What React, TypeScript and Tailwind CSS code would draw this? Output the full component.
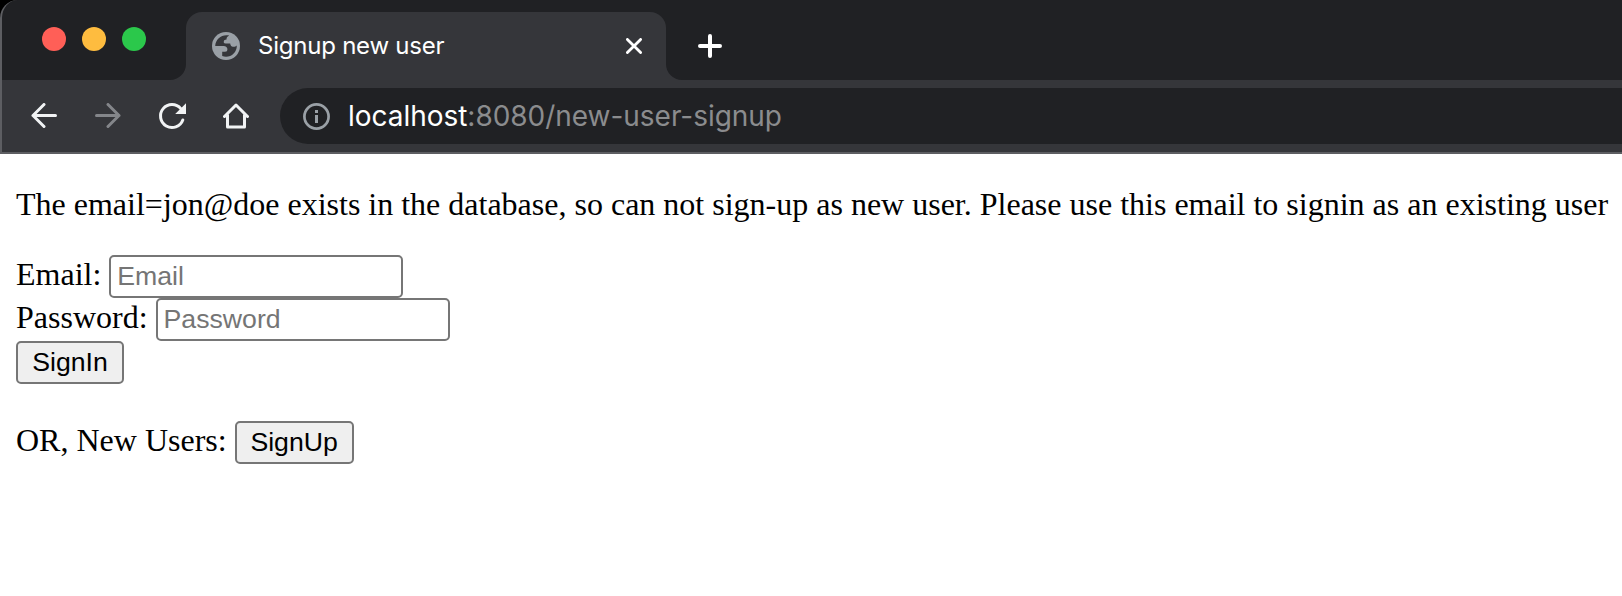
import React from "react";

function TrafficLights() {
  return (
    <div className="mt-[27px] ml-[40px] flex w-[144px] shrink-0 gap-4">
      <span className="size-6 rounded-full bg-[#ff5f57]" />
      <span className="size-6 rounded-full bg-[#febc3f]" />
      <span className="size-6 rounded-full bg-[#2bc84b]" />
    </div>
  );
}

function Globe() {
  return (
    <svg viewBox="0 0 28 28" className="size-7 shrink-0">
      <circle cx="14" cy="14" r="14" fill="#9aa0a6" />
      <path
        d="M17.300 3.600C10.500 1.800 3.600 6.500 3.200 14H11.500C14 14 15.400 15.300 15.400 17.200C15.400 18.900 14.600 19.700 13 19.700H10.200V24.100C17.500 26.700 25 21.500 24.800 13.500C23.800 14.600 22.400 15 21 14.800C19.200 14.500 18.400 13.300 18.200 11.400H13.500C12 11.400 11.600 10.700 11.800 9.500C12 8.200 12.900 7.700 14.500 7.600C14.500 5.500 15.500 4.300 17.300 3.600Z"
        fill="#35363a"
      />
    </svg>
  );
}

function Tab() {
  return (
    <div className="flex">
      <div className="w-4 self-end">
        <svg viewBox="0 0 16 16" className="size-4">
          <path d="M16 0V16H0A16 16 0 0 0 16 0Z" fill="#35363a" />
        </svg>
      </div>
      <div className="mt-3 flex w-[480px] items-center rounded-t-[16px] bg-[#35363a] pr-6 pl-[26px]">
        <Globe />
        <span className="ml-[18px] flex-1 whitespace-nowrap font-['Inter',sans-serif] text-[24px] leading-[30px] font-[430] tracking-[-0.23px] text-white">
          Signup new user
        </span>
        <svg viewBox="0 0 16 16" className="size-4" fill="none" stroke="#fff" strokeWidth="2.8" strokeLinecap="round">
          <path d="M1.400 1.400L14.600 14.600M14.600 1.400L1.400 14.600" />
        </svg>
      </div>
      <div className="w-4 self-end">
        <svg viewBox="0 0 16 16" className="size-4">
          <path d="M0 0V16H16A16 16 0 0 1 0 0Z" fill="#35363a" />
        </svg>
      </div>
      <svg viewBox="0 0 24 24" className="mt-[34px] ml-4 size-6" fill="none" stroke="#fff" strokeWidth="4" strokeLinecap="round">
        <path d="M12 2V22M2 12H22" />
      </svg>
    </div>
  );
}

function Toolbar() {
  return (
    <div className="flex h-[74px] items-start border-b-2 border-[#5d5e62] bg-[#35363a] pt-2">
      <div className="flex h-14 w-[278px] shrink-0 items-center gap-[38px] pl-[29px]">
        <svg viewBox="0 0 26 26" className="size-[26px]" fill="none" stroke="#f1f3f4" strokeWidth="3" strokeLinecap="round" strokeLinejoin="round">
          <path d="M24.500 12.500H2M13 1.500L2 12.500L13 23.500" />
        </svg>
        <svg viewBox="0 0 26 26" className="size-[26px]" fill="none" stroke="#84868a" strokeWidth="3" strokeLinecap="round" strokeLinejoin="round">
          <path d="M1.500 12.500H24M13 1.500L24 12.500L13 23.500" />
        </svg>
        <svg viewBox="0 0 26 26" className="size-[26px] overflow-visible" fill="none" stroke="#f1f3f4" strokeWidth="3" strokeLinecap="round">
          <path d="M21.800 5.600A11.500 11.500 0 1 0 23.800 17" />
          <path d="M27 0.200V11H16.200Z" fill="#f1f3f4" stroke="none" />
        </svg>
        <svg viewBox="0 0 26 26" className="size-[26px]" fill="none" stroke="#f1f3f4" strokeWidth="3" strokeLinecap="round" strokeLinejoin="round">
          <path d="M1.500 13.500L13 2L24.500 13.500M4.500 12V24H21.500V12" />
        </svg>
      </div>
      <div className="flex h-14 flex-1 items-center rounded-l-full bg-[#202124] pl-[23px]">
        <svg viewBox="0 0 27 27" className="size-[27px]" fill="none" stroke="#9aa0a6" strokeWidth="2.700">
          <circle cx="13.500" cy="13.500" r="12.100" />
          <path d="M13.500 12V20M13.500 7V10" strokeWidth="3" />
        </svg>
        <span className="ml-[18px] whitespace-nowrap font-['Inter',sans-serif] text-[28px] leading-[34px] font-[430] tracking-[-0.03px] text-[#8b8c8e]">
          <span className="text-white">localhost</span>:8080/new-user-signup
        </span>
      </div>
    </div>
  );
}

const field =
  "ml-2 h-[43px] w-[294px] rounded-[5px] border-2 border-[#767676] bg-white px-[6px] pb-[1px] font-['Liberation_Sans',sans-serif] text-[26.667px] text-black outline-none placeholder:text-[#757575] placeholder:opacity-100";
const button =
  "h-[43px] rounded-[5px] border-2 border-[#767676] bg-[#efefef] pb-[1px] font-['Liberation_Sans',sans-serif] text-[26.667px] leading-[30px] text-black";

export default function App() {
  return (
    <div className="h-[596px] w-[1622px] overflow-hidden bg-white">
      <header className="bg-black">
        <div className="overflow-hidden rounded-tl-[18px] border-l-2 border-[#5d5e62] bg-[#202124]">
          <div className="flex h-20">
            <div className="w-[168px] shrink-0">
              <TrafficLights />
            </div>
            <Tab />
          </div>
          <Toolbar />
        </div>
      </header>
      <main className="px-4 pt-8 font-['Liberation_Serif',serif] text-[32px] leading-[36px] text-black">
        <p className="whitespace-nowrap">
          The email=jon@doe exists in the database, so can not sign-up as new user. Please use this email to signin as an existing user
        </p>
        <form className="mt-[33px]">
          <div className="flex h-[43px] items-start">
            <label className="pt-[1px]">Email:</label>
            <input className={field} placeholder="Email" />
          </div>
          <div className="flex h-[43px] items-start">
            <label className="pt-[1px]">Password:</label>
            <input className={field} type="password" placeholder="Password" />
          </div>
          <button type="button" className={`${button} block w-[108px]`}>SignIn</button>
        </form>
        <div className="mt-[37px] flex items-start">
          <span className="pt-[1px]">OR, New Users:</span>
          <button type="button" className={`${button} ml-2 w-[119px]`}>SignUp</button>
        </div>
      </main>
    </div>
  );
}
